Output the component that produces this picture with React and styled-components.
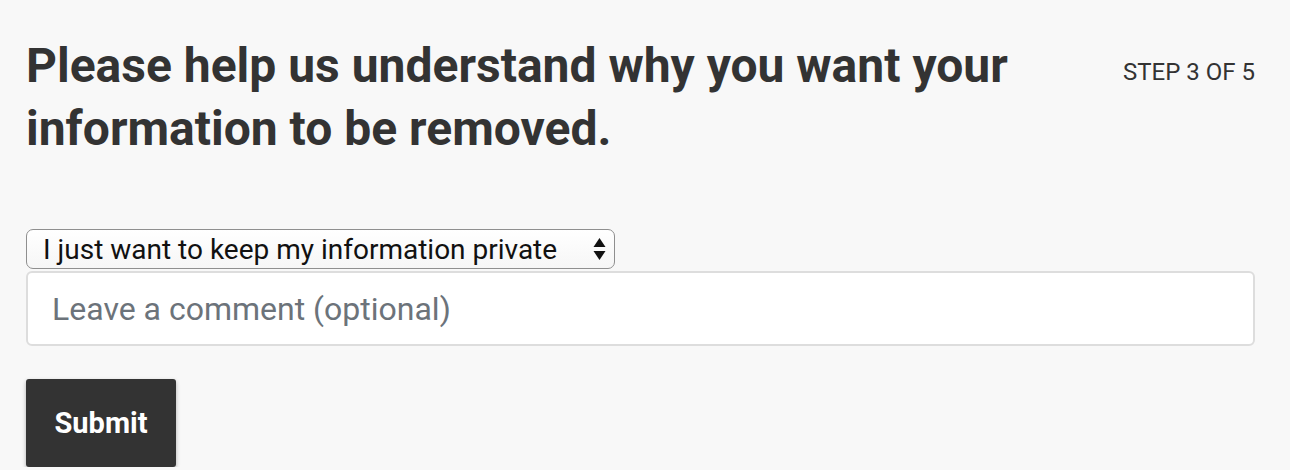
import React from 'react'
import styled, { createGlobalStyle } from 'styled-components'

const Global = createGlobalStyle`
  body {
    margin: 0;
    background: #f8f8f8;
    font-family: Roboto, 'Noto Sans', sans-serif;
    color: #333;
  }
`

const Page = styled.div`
  width: 1229px;
  padding: 34px 0 0 26px;
`

const Header = styled.div`
  display: flex;
  justify-content: space-between;
  align-items: flex-start;
`

const Title = styled.h1`
  margin: 0;
  width: 1020px;
  font-size: 48px;
  line-height: 63px;
  font-weight: 700;
  color: #333;
`

const Step = styled.span`
  margin-top: 24px;
  font-size: 24px;
  line-height: 28px;
  color: #333;
`

const Form = styled.form`
  margin-top: 69px;
  display: flex;
  flex-direction: column;
  align-items: flex-start;
`

const SelectWrap = styled.div`
  position: relative;
  width: 589px;
  height: 40px;
`

const Select = styled.select`
  appearance: none;
  width: 100%;
  height: 100%;
  padding: 0 40px 0 16px;
  border: 1.5px solid #8f8f8f;
  border-radius: 7px;
  background: linear-gradient(#fff, #f6f6f6);
  font-family: Roboto, sans-serif;
  font-size: 28px;
  color: #111;
`

const Arrows = styled.svg`
  position: absolute;
  right: 9px;
  top: 9px;
  pointer-events: none;
`

const Comment = styled.input`
  box-sizing: border-box;
  margin-top: 2px;
  width: 100%;
  height: 75px;
  padding: 0 24px;
  border: 2px solid #ddd;
  border-radius: 6px;
  background: #fff;
  font-family: Roboto, sans-serif;
  font-size: 32px;
  color: #333;
  &::placeholder {
    color: #6c737a;
  }
`

const Submit = styled.button`
  margin-top: 33px;
  width: 150px;
  height: 88px;
  border: none;
  border-radius: 3px;
  background: #333;
  color: #fff;
  font-family: Roboto, sans-serif;
  font-weight: 700;
  font-size: 29px;
  box-shadow: 0 2px 4px rgba(0, 0, 0, 0.3);
`

export default function App() {
  return (
    <Page>
      <Global />
      <Header>
        <Title>Please help us understand why you want your information to be removed.</Title>
        <Step>STEP 3 OF 5</Step>
      </Header>
      <Form onSubmit={(e) => e.preventDefault()}>
        <SelectWrap>
          <Select defaultValue='private'>
            <option value='private'>I just want to keep my information private</option>
          </Select>
          <Arrows width='13' height='22' viewBox='0 0 13 22'>
            <path d='M6.5 0L12.5 9H0.5Z' fill='#111' />
            <path d='M6.5 22L12.5 13H0.5Z' fill='#111' />
          </Arrows>
        </SelectWrap>
        <Comment placeholder='Leave a comment (optional)' />
        <Submit type='submit'>Submit</Submit>
      </Form>
    </Page>
  )
}
